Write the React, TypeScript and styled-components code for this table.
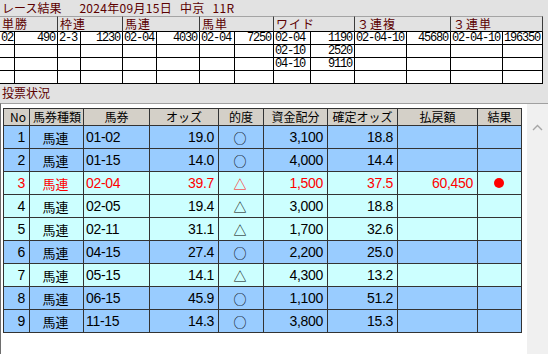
import styled, { createGlobalStyle } from 'styled-components';

const GlobalStyle = createGlobalStyle`
  html, body {
    margin: 0;
    padding: 0;
  }
  body {
    width: 548px;
    height: 354px;
    overflow: hidden;
    background: #e2e2e2;
    font-family: "Noto Sans CJK JP", sans-serif;
  }
  * {
    box-sizing: border-box;
  }
`;

// payout grid: horse / amount pairs for each bet type
const RESULT_COLS = [15, 43, 23, 42, 34, 43, 35, 39, 37, 44, 52, 44, 52, 40];
const RESULT_HEADS = ['単勝', '枠連', '馬連', '馬単', 'ワイド', '３連複', '３連単'];
const RESULT_ROWS: string[][] = [
  ['02', '490', '2-3', '1230', '02-04', '4030', '02-04', '7250', '02-04', '1190', '02-04-10', '45680', '02-04-10', '196350'],
  ['', '', '', '', '', '', '', '', '02-10', '2520', '', '', '', ''],
  ['', '', '', '', '', '', '', '', '04-10', '9110', '', '', '', ''],
  ['', '', '', '', '', '', '', '', '', '', '', '', '', ''],
];

const BET_COLS = [26, 54, 66, 69, 45, 64, 70, 80, 44];
const BET_HEADS = ['No', '馬券種類', '馬券', 'オッズ', '的度', '資金配分', '確定オッズ', '払戻額', '結果'];

type Bet = {
  no: number;
  kind: string;
  ticket: string;
  odds: string;
  mark: string;
  stake: string;
  fixedOdds: string;
  payout: string;
  hit: boolean;
  tone: 'blue' | 'cyan';
};

const BETS: Bet[] = [
  { no: 1, kind: '馬連', ticket: '01-02', odds: '19.0', mark: '○', stake: '3,100', fixedOdds: '18.8', payout: '', hit: false, tone: 'blue' },
  { no: 2, kind: '馬連', ticket: '01-15', odds: '14.0', mark: '○', stake: '4,000', fixedOdds: '14.4', payout: '', hit: false, tone: 'blue' },
  { no: 3, kind: '馬連', ticket: '02-04', odds: '39.7', mark: '△', stake: '1,500', fixedOdds: '37.5', payout: '60,450', hit: true, tone: 'cyan' },
  { no: 4, kind: '馬連', ticket: '02-05', odds: '19.4', mark: '△', stake: '3,000', fixedOdds: '18.8', payout: '', hit: false, tone: 'cyan' },
  { no: 5, kind: '馬連', ticket: '02-11', odds: '31.1', mark: '△', stake: '1,700', fixedOdds: '32.6', payout: '', hit: false, tone: 'cyan' },
  { no: 6, kind: '馬連', ticket: '04-15', odds: '27.4', mark: '○', stake: '2,200', fixedOdds: '25.0', payout: '', hit: false, tone: 'blue' },
  { no: 7, kind: '馬連', ticket: '05-15', odds: '14.1', mark: '△', stake: '4,300', fixedOdds: '13.2', payout: '', hit: false, tone: 'cyan' },
  { no: 8, kind: '馬連', ticket: '06-15', odds: '45.9', mark: '○', stake: '1,100', fixedOdds: '51.2', payout: '', hit: false, tone: 'blue' },
  { no: 9, kind: '馬連', ticket: '11-15', odds: '14.3', mark: '○', stake: '3,800', fixedOdds: '15.3', payout: '', hit: false, tone: 'blue' },
];

export default function App() {
  return (
    <>
      <GlobalStyle />
      <Page>
        <TitleBar>
          <Title>レース結果</Title>
          <RaceInfo>
            <span>2024年09月15日</span>
            <span>中京</span>
            <span>11R</span>
          </RaceInfo>
        </TitleBar>

        <ResultGrid>
          {RESULT_HEADS.map(head => (
            <ResultHead key={head}>{head}</ResultHead>
          ))}
          {RESULT_ROWS.map((row, r) =>
            row.map((value, c) => (
              <ResultCell key={`${r}-${c}`} $align={c % 2 === 0 ? 'left' : 'right'}>
                {value}
              </ResultCell>
            ))
          )}
        </ResultGrid>

        <SectionLabel>投票状況</SectionLabel>

        <Panel>
          <TableArea>
            <BetTable>
              {BET_HEADS.map((head, i) => (
                <BetHead key={head} $align={i === 0 ? 'right' : 'center'}>
                  {head}
                </BetHead>
              ))}
              {BETS.map(bet => (
                <BetRow key={bet.no} $tone={bet.tone} $hit={bet.hit}>
                  <BetCell $align="right">{bet.no}</BetCell>
                  <BetCell $align="center" $kanji>{bet.kind}</BetCell>
                  <BetCell $align="left">{bet.ticket}</BetCell>
                  <BetCell $align="right">{bet.odds}</BetCell>
                  <BetCell $align="center" $kanji>{bet.mark}</BetCell>
                  <BetCell $align="right">{bet.stake}</BetCell>
                  <BetCell $align="right">{bet.fixedOdds}</BetCell>
                  <BetCell $align="right">{bet.payout}</BetCell>
                  <BetCell $align="center">{bet.hit && <HitDot />}</BetCell>
                </BetRow>
              ))}
            </BetTable>
          </TableArea>
          <ScrollBar>
            <svg width="11" height="7" viewBox="0 0 11 7">
              <polyline points="1,6 5.5,1.5 10,6" fill="none" stroke="#a6a6a6" strokeWidth="1.4" />
            </svg>
          </ScrollBar>
        </Panel>
      </Page>
    </>
  );
}

const Page = styled.div`
  width: 548px;
  height: 354px;
  display: flex;
  flex-direction: column;
`;

const TitleBar = styled.div`
  height: 16px;
  display: flex;
  align-items: center;
  gap: 18px;
  padding-left: 2px;
  color: #5c0000;
  font-size: 12px;
  line-height: 16px;
`;

const Title = styled.div`
  letter-spacing: 0;
`;

const RaceInfo = styled.div`
  display: flex;
  gap: 8px;
  letter-spacing: 0.3px;
`;

const ResultGrid = styled.div`
  display: grid;
  width: 543px;
  grid-template-columns: ${RESULT_COLS.map(w => `${w}px`).join(' ')};
`;

const ResultHead = styled.div`
  grid-column: span 2;
  height: 16px;
  padding-left: 2px;
  border-top: 1px solid #a4a4a4;
  border-right: 1px solid #3c3c3c;
  border-bottom: 1px solid #000;
  color: #5c0000;
  font-size: 12px;
  line-height: 14px;
  letter-spacing: 1px;
`;

const ResultCell = styled.div<{ $align: 'left' | 'right' }>`
  height: 13px;
  padding: 0 2px 0 1px;
  background: #fff;
  border-right: 1px solid #000;
  border-bottom: 1px solid #000;
  text-align: ${props => props.$align};
  font-family: "Liberation Mono", monospace;
  font-size: 12px;
  letter-spacing: -1.2px;
  line-height: 12px;
  white-space: nowrap;
  overflow: hidden;
`;

const SectionLabel = styled.div`
  height: 19px;
  padding: 2px 0 0 2px;
  color: #5c0000;
  font-size: 12px;
  line-height: 14px;
`;

const Panel = styled.div`
  flex: 1;
  display: flex;
  border-top: 1px solid #a0a0a0;
  border-left: 1px solid #6e6e6e;
`;

const TableArea = styled.div`
  flex: 1;
  background: #fff;
  padding: 4px 0 0 2px;
`;

const ScrollBar = styled.div`
  width: 21px;
  background: #f0f0f0;
  display: flex;
  justify-content: center;
  padding-top: 20px;
`;

const BetTable = styled.div`
  display: grid;
  width: 519px;
  grid-template-columns: ${BET_COLS.map(w => `${w}px`).join(' ')};
  border-left: 1px solid #333;
  border-top: 1px solid #333;
`;

const BetHead = styled.div<{ $align: 'right' | 'center' }>`
  height: 17px;
  padding: 0 3px;
  background: #d4d0c8;
  border-right: 1px solid #333;
  border-bottom: 1px solid #333;
  text-align: ${props => props.$align};
  font-size: 12px;
  line-height: 16px;
  white-space: nowrap;
`;

const BetRow = styled.div<{ $tone: 'blue' | 'cyan'; $hit: boolean }>`
  display: contents;
  color: ${props => (props.$hit ? '#ff0000' : '#000')};

  & > div {
    background: ${props => (props.$tone === 'blue' ? '#99ccff' : '#ccffff')};
  }
`;

const BetCell = styled.div<{ $align: 'left' | 'right' | 'center'; $kanji?: boolean }>`
  height: 23px;
  display: flex;
  align-items: center;
  justify-content: ${props =>
    props.$align === 'left' ? 'flex-start' : props.$align === 'right' ? 'flex-end' : 'center'};
  padding: 0 4px 0 2px;
  border-right: 1px solid #333;
  border-bottom: 1px solid #333;
  font-family: ${props =>
    props.$kanji ? '"Noto Sans CJK JP", sans-serif' : '"Liberation Sans", "Noto Sans CJK JP", sans-serif'};
  font-size: ${props => (props.$kanji ? '13px' : '14px')};
  letter-spacing: ${props => (props.$kanji ? '0' : '-0.3px')};
  white-space: nowrap;
`;

const HitDot = styled.span`
  width: 10px;
  height: 10px;
  border-radius: 50%;
  background: #ff0000;
`;
